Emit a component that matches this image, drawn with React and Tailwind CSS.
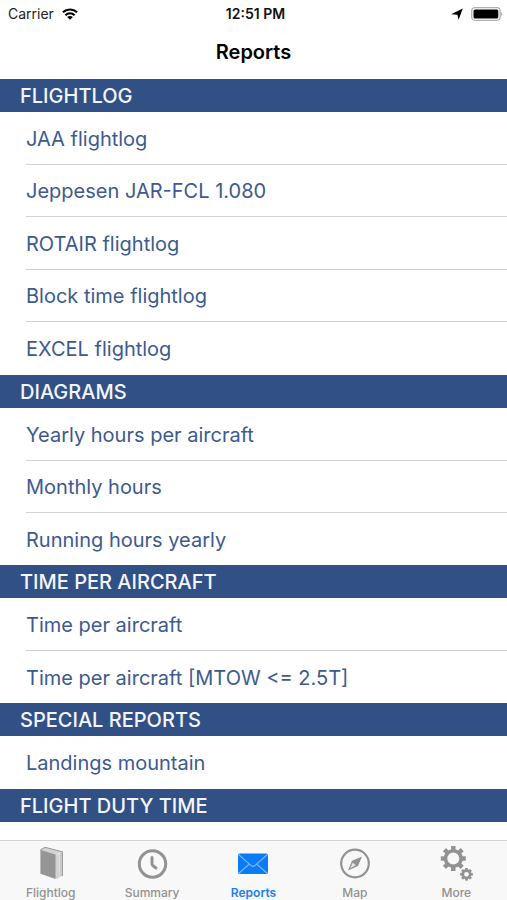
import React from "react";

const sections = [
  {
    title: "FLIGHTLOG",
    rows: [
      "JAA flightlog",
      "Jeppesen JAR-FCL 1.080",
      "ROTAIR flightlog",
      "Block time flightlog",
      "EXCEL flightlog",
    ],
  },
  {
    title: "DIAGRAMS",
    rows: ["Yearly hours per aircraft", "Monthly hours", "Running hours yearly"],
  },
  {
    title: "TIME PER AIRCRAFT",
    rows: ["Time per aircraft", "Time per aircraft [MTOW <= 2.5T]"],
  },
  { title: "SPECIAL REPORTS", rows: ["Landings mountain"] },
  { title: "FLIGHT DUTY TIME", rows: [] },
];

function BookIcon() {
  return (
    <svg viewBox="0 0 36 36" className="size-9" aria-hidden="true">
      <path d="M7.500 4.500 12 2 29.500 6.500V30.500L24 34 7.500 28.500Z" fill="#d2d2d2" />
      <path d="M7.500 5 22.500 9.500V34L7.500 28.800Z" fill="#959595" />
      <path d="M7.500 5 12 2.300 29.500 6.800V31" fill="none" stroke="#9c9c9c" strokeWidth="1" />
      <path d="M23.500 10 27 7.800V32" fill="none" stroke="#ececec" strokeWidth="1" />
      <path d="M27.800 8V31.500" fill="none" stroke="#b4b4b4" strokeWidth="0.8" />
    </svg>
  );
}

function ClockIcon() {
  return (
    <svg viewBox="0 0 36 36" className="size-9" fill="none" stroke="#929292" aria-hidden="true">
      <circle cx="18.500" cy="19" r="13.200" strokeWidth="3" />
      <path
        d="M18 12.500V19Q18 20 19 20.700L22 23"
        strokeWidth="3"
        strokeLinejoin="round"
        strokeLinecap="round"
      />
    </svg>
  );
}

function MailIcon() {
  return (
    <svg viewBox="0 0 36 36" className="size-9" aria-hidden="true">
      <rect x="3" y="8.500" width="30" height="20.500" rx="2" fill="#0a7cf8" />
      <path
        d="M3.500 9.500 16.500 20.800Q18 22 19.500 20.800L32.500 9.500M3.500 28.500 14.500 19M32.500 28.500 21.500 19"
        fill="none"
        stroke="#7dbafb"
        strokeWidth="1.100"
      />
    </svg>
  );
}

function CompassIcon() {
  return (
    <svg viewBox="0 0 36 36" className="size-9" aria-hidden="true">
      <circle cx="18" cy="18.500" r="13.800" fill="none" stroke="#929292" strokeWidth="2.200" />
      <path d="M25 11.500 15 15.800 11 25.500 21 21Z" fill="#929292" />
      <path d="M15.800 17.500 18.800 20.300 13 23.500Z" fill="#e4e4e4" />
    </svg>
  );
}

const teeth = [0, 45, 90, 135, 180, 225, 270, 315];

function Gear({ cx, cy, r, stroke, reach, tooth }) {
  return (
    <g>
      <circle cx={cx} cy={cy} r={r} fill="none" stroke="#929292" strokeWidth={stroke} />
      {teeth.map((angle) => (
        <rect
          key={angle}
          x={cx - tooth / 2}
          y={cy - reach}
          width={tooth}
          height={reach - r}
          fill="#929292"
          transform={`rotate(${angle} ${cx} ${cy})`}
        />
      ))}
    </g>
  );
}

function GearsIcon() {
  return (
    <svg viewBox="0 0 36 36" className="size-9" aria-hidden="true">
      <Gear cx={15.3} cy={13.5} r={7.8} stroke={3.6} reach={12.5} tooth={4.4} />
      <Gear cx={28.5} cy={29.3} r={3.7} stroke={2.6} reach={6.3} tooth={2.7} />
    </svg>
  );
}

const tabs = [
  { label: "Flightlog", Icon: BookIcon },
  { label: "Summary", Icon: ClockIcon },
  { label: "Reports", Icon: MailIcon, active: true },
  { label: "Map", Icon: CompassIcon },
  { label: "More", Icon: GearsIcon },
];

function StatusBar() {
  return (
    <div className="grid h-7 grid-cols-3 items-center pr-1 pl-2 text-sm">
      <div className="flex items-center gap-2">
        <span className="text-[#222]">Carrier</span>
        <svg viewBox="0 0 18 13" className="h-3 w-4" fill="none" stroke="#000" strokeWidth="2.300" role="img" aria-label="Wi-Fi">
          <path d="M1 4.600C5.500.4 12.500.4 17 4.600" />
          <path d="M3.800 7.800C6.800 5.100 11.200 5.100 14.200 7.800" />
          <path d="M9 13 5.800 9.900C7.600 8.300 10.400 8.300 12.200 9.900Z" fill="#000" stroke="none" />
        </svg>
      </div>
      <span className="text-center font-semibold text-[#111]">12:51 PM</span>
      <div className="flex items-center justify-end gap-2">
        <svg viewBox="0 0 12 12" className="size-3" role="img" aria-label="Location">
          <path d="M11.800.4 7.600 11.700 6.400 6.700.200 6.200Z" fill="#000" />
        </svg>
        <svg viewBox="0 0 32 14" className="h-3.5 w-8" role="img" aria-label="Battery full">
          <rect x="0.7" y="0.7" width="28.500" height="12.600" rx="3.200" fill="none" stroke="#b0b0b0" strokeWidth="1.300" />
          <rect x="2.500" y="2.500" width="24.800" height="9" rx="1.500" fill="#000" />
          <path d="M30.200 5C31.800 5.500 31.800 8.500 30.200 9Z" fill="#a8a8a8" />
        </svg>
      </div>
    </div>
  );
}

export default function App() {
  return (
    <div className="flex h-screen flex-col bg-white font-['Inter','Liberation_Sans',sans-serif] text-black">
      <header className="h-[79px] shrink-0">
        <StatusBar />
        <h1 className="pt-2 text-center text-xl leading-8 font-semibold">Reports</h1>
      </header>

      <main className="min-h-0 flex-1 overflow-hidden">
        {sections.map((section) => (
          <section key={section.title}>
            <h2 className="flex h-[33px] items-center bg-[#315085] pt-px pl-5 text-xl font-medium text-[#f4f6fb]">
              {section.title}
            </h2>
            <ul className="pl-[26px]">
              {section.rows.map((row) => (
                <li
                  key={row}
                  className="h-[52px] border-b border-[#d2d2d4] first:h-[53px] last:border-b-0 nth-5:h-[53px] nth-last-3:h-[53px]"
                >
                  <a href="#" className="flex h-full items-center pt-px text-xl text-[#3d5a8f]">
                    {row}
                  </a>
                </li>
              ))}
            </ul>
          </section>
        ))}
      </main>

      <nav className="grid h-[60px] shrink-0 grid-cols-5 border-t border-[#d4d4d4] bg-[#f8f8f8]">
        {tabs.map(({ label, Icon, active }) => (
          <button
            key={label}
            type="button"
            aria-current={active ? "page" : undefined}
            className={
              active
                ? "flex flex-col items-center pt-1 text-xs font-semibold text-[#1a7ff0]"
                : "flex flex-col items-center pt-1 text-xs font-medium text-[#929292]"
            }
          >
            <Icon />
            <span className="pt-1 leading-4">{label}</span>
          </button>
        ))}
      </nav>
    </div>
  );
}
